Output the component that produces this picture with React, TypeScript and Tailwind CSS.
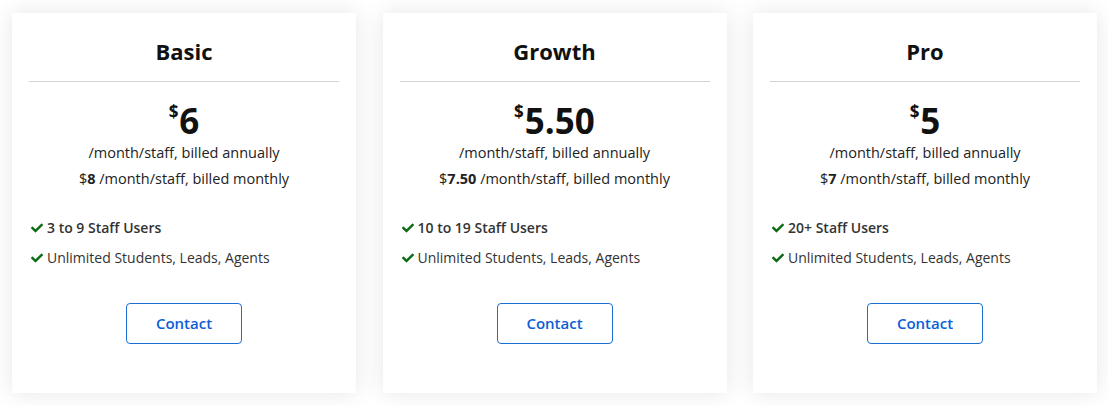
import { FaCheck } from "react-icons/fa";

type Plan = {
  name: string;
  price: string;
  monthly: string;
  users: string;
};

const PLANS: Plan[] = [
  { name: "Basic", price: "6", monthly: "8", users: "3 to 9 Staff Users" },
  { name: "Growth", price: "5.50", monthly: "7.50", users: "10 to 19 Staff Users" },
  { name: "Pro", price: "5", monthly: "7", users: "20+ Staff Users" },
];

function PlanCard({ plan }: { plan: Plan }) {
  return (
    <div className="w-[344px] h-[380px] bg-white shadow-[0_0_22px_rgba(0,0,0,0.1)] px-[17px] pt-[24px]">
      <h2 className="text-center text-[22px] leading-[28px] font-bold text-[#111]">{plan.name}</h2>
      <hr className="mt-[16px] border-t border-[#d4d4d4]" />

      <div className="mt-[19px] flex justify-center items-start text-[#111]">
        <span className="text-[17px] leading-[16px] font-bold mt-[3px] mr-[1px]">$</span>
        <span className="text-[35px] leading-[40px] font-bold">{plan.price}</span>
      </div>
      <p className="text-center text-[14.5px] leading-[20px] text-[#222] mt-[2px]">
        /month/staff, billed annually
      </p>
      <p className="text-center text-[14.5px] leading-[20px] text-[#222] mt-[6px]">
        $<span className="font-bold">{plan.monthly}</span> /month/staff, billed monthly
      </p>

      <ul className="mt-[29px] pl-[2px] space-y-[10px] text-[14px] leading-[20px] text-[#333]">
        <li className="flex items-center gap-[4px]">
          <FaCheck className="text-[#0b6b12] w-[12px] h-[12px]" />
          <span className="font-semibold">{plan.users}</span>
        </li>
        <li className="flex items-center gap-[4px]">
          <FaCheck className="text-[#0b6b12] w-[12px] h-[12px]" />
          <span>Unlimited Students, Leads, Agents</span>
        </li>
      </ul>

      <div className="mt-[35px] flex justify-center">
        <button
          type="button"
          className="w-[116px] h-[41px] border border-[#1a6fd1] rounded-[4px] text-[15px] font-semibold text-[#0b5ed7] bg-white"
        >
          Contact
        </button>
      </div>
    </div>
  );
}

export default function App() {
  return (
    <div
      className="w-[1108px] h-[406px] bg-white flex justify-between pl-[12px] pr-[11px] pt-[13px]"
      style={{ fontFamily: '"Open Sans", "Noto Sans", sans-serif' }}
    >
      {PLANS.map((plan) => (
        <PlanCard key={plan.name} plan={plan} />
      ))}
    </div>
  );
}
